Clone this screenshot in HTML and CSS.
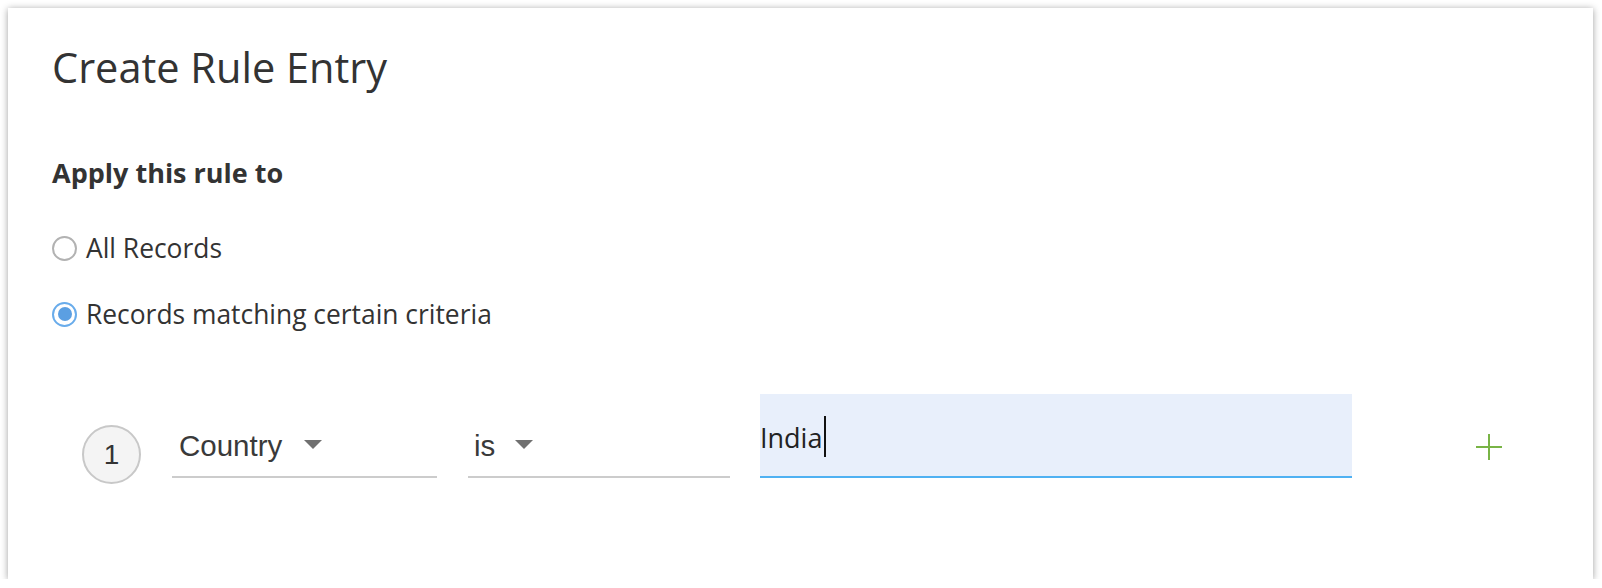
FILE: index.html
```html
<!DOCTYPE html>
<html>
<head>
<meta charset="utf-8">
<link rel="stylesheet" href="styles.css">
</head>
<body>
<div class="card">
  <h1 class="title">Create Rule Entry</h1>
  <h2 class="section">Apply this rule to</h2>
  <div class="options">
    <label class="option"><span class="radio"></span><span>All Records</span></label>
    <label class="option"><span class="radio checked"></span><span>Records matching certain criteria</span></label>
  </div>
  <div class="criteria">
    <div class="num">1</div>
    <div class="select field-country"><span class="sel-text">Country</span><span class="caret"></span></div>
    <div class="select field-op"><span class="sel-text">is</span><span class="caret"></span></div>
    <div class="value"><span class="value-text">India</span><span class="cursor"></span></div>
    <div class="add">
      <svg width="26" height="26" viewBox="0 0 26 26"><path d="M13 0V26M0 13H26" stroke="#79b446" stroke-width="2" fill="none"/></svg>
    </div>
  </div>
</div>
</body>
</html>
```

FILE: styles.css
```css
html, body { margin: 0; padding: 0; background: #ffffff; }
body { padding: 8px 0 0 8px; font-family: "Open Sans", "Lato", sans-serif; color: #333333; }
.card {
  box-sizing: border-box;
  width: 1585px;
  height: 571px;
  background: #ffffff;
  box-shadow: 0 1px 7px rgba(0,0,0,0.38);
  padding: 35px 0 0 44px;
}
.title {
  margin: 0;
  font-size: 41.5px;
  line-height: 48px;
  font-weight: 400;
  color: #333333;
}
.section {
  margin: 65px 0 0 0;
  font-size: 27px;
  line-height: 34px;
  font-weight: 700;
  color: #333333;
}
.options { display: flex; flex-direction: column; gap: 34px; margin-top: 42px; }
.option {
  display: flex;
  align-items: center;
  gap: 9px;
  font-size: 26.4px;
  line-height: 32px;
  color: #333333;
}
.radio {
  box-sizing: border-box;
  width: 25px; height: 25px;
  border-radius: 50%;
  border: 2px solid #b2b2b2;
  background: #fff;
  position: relative;
}
.radio.checked { border-color: #69aceb; }
.radio.checked::after {
  content: "";
  position: absolute;
  left: 3.5px; top: 3.5px;
  width: 14px; height: 14px;
  border-radius: 50%;
  background: #5b9fe2;
}
.criteria {
  display: flex;
  align-items: flex-start;
  margin-top: 64px;
  padding-left: 30px;
  height: 84px;
}
.num {
  box-sizing: border-box;
  width: 59px; height: 59px;
  margin-top: 31px;
  border-radius: 50%;
  border: 2px solid #c8c8c8;
  background: #f4f4f4;
  display: flex; align-items: center; justify-content: center;
  font-family: "Liberation Sans", Arial, sans-serif;
  font-size: 28px;
  color: #333;
}
.select {
  box-sizing: border-box;
  height: 84px;
  border-bottom: 2px solid #cccccc;
  display: flex;
  align-items: flex-end;
  padding-bottom: 13px;
  font-family: "Liberation Sans", Arial, sans-serif;
  font-size: 29.5px;
  line-height: 34px;
  color: #3a3a3a;
}
.field-country { width: 265px; margin-left: 31px; padding-left: 7px; }
.field-op { width: 262px; margin-left: 31px; padding-left: 6px; }
.caret {
  width: 0; height: 0;
  border-left: 9px solid transparent;
  border-right: 9px solid transparent;
  border-top: 9px solid #707070;
  margin-left: 22px;
  margin-bottom: 14px;
}
.field-op .caret { margin-left: 20px; }
.value {
  box-sizing: border-box;
  width: 592px;
  height: 84px;
  margin-left: 30px;
  background: #e8effb;
  border-bottom: 2px solid #4fb1f2;
  display: flex;
  align-items: flex-end;
  padding-bottom: 18px;
  font-size: 27px;
  line-height: 40px;
  color: #222;
}
.cursor {
  display: inline-block;
  width: 2px; height: 41px;
  background: #111;
  margin-left: 2px;
  margin-bottom: 1px;
}
.add { margin-left: 124px; margin-top: 40px; width: 26px; height: 26px; }
.add svg { display: block; }
```
